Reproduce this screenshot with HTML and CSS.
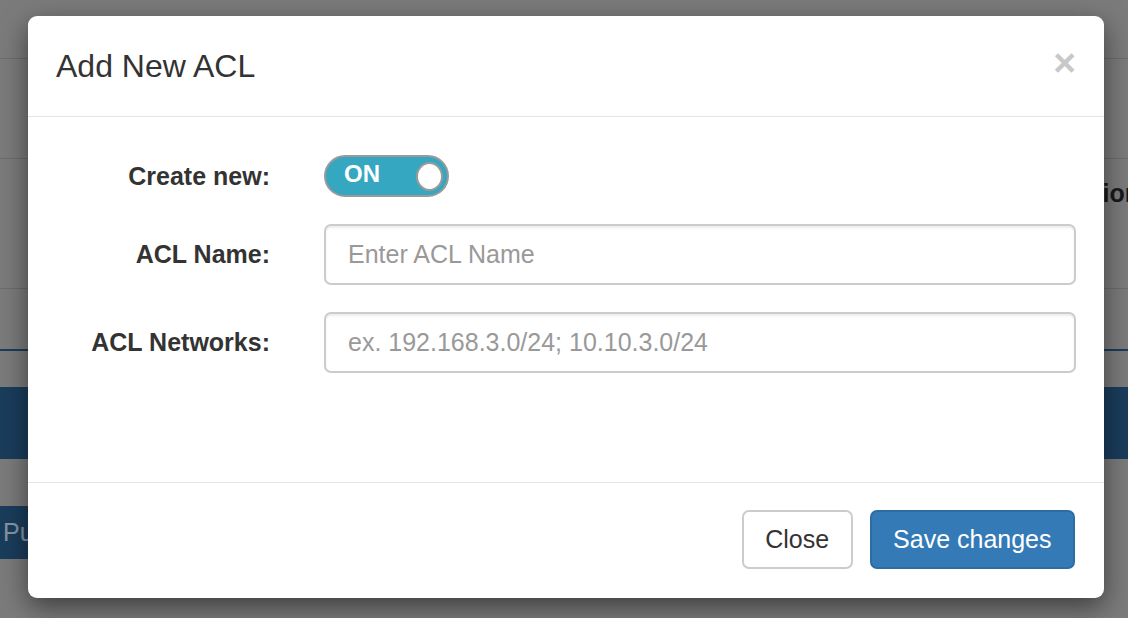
FILE: index.html
```html
<!DOCTYPE html>
<html>
<head>
<meta charset="utf-8">
<title>Add New ACL</title>
<link rel="stylesheet" href="styles.css">
</head>
<body>
<div class="page">
  <div class="bg-top"></div>
  <div class="bg-row"></div>
  <div class="bg-head"><span class="bg-head-text">Action</span></div>
  <div class="bg-row2"></div>
  <div class="bg-gap1"></div>
  <div class="bg-band"></div>
  <div class="bg-gap2"></div>
  <div class="bg-btn-row"><span class="bg-btn">Publish</span></div>
</div>

<div class="modal">
  <div class="modal-header">
    <h4 class="modal-title">Add New ACL</h4>
    <button class="close" type="button">&times;</button>
  </div>
  <div class="modal-body">
    <div class="form-group first">
      <label class="control-label">Create new:</label>
      <div class="switch">
        <span class="switch-text">ON</span>
        <span class="switch-knob"></span>
      </div>
    </div>
    <div class="form-group">
      <label class="control-label">ACL Name:</label>
      <input class="form-control" type="text" placeholder="Enter ACL Name">
    </div>
    <div class="form-group">
      <label class="control-label">ACL Networks:</label>
      <input class="form-control" type="text" placeholder="ex. 192.168.3.0/24; 10.10.3.0/24">
    </div>
  </div>
  <div class="modal-footer">
    <button class="btn btn-default" type="button">Close</button>
    <button class="btn btn-primary" type="button">Save changes</button>
  </div>
</div>
</body>
</html>
```

FILE: styles.css
```css
html, body {
  margin: 0;
  padding: 0;
  height: 100%;
  overflow: hidden;
}
body {
  font-family: "Liberation Sans", Arial, Helvetica, sans-serif;
  background: #7b7b7b;
  color: #333;
  position: relative;
}

/* dimmed page behind the modal */
.page {
  width: 100%;
  height: 618px;
  background: #7b7b7b;
}
.bg-top {
  height: 58px;
  border-bottom: 1px solid #6c6c6c;
}
.bg-row {
  height: 99px;
  border-bottom: 1px solid #6c6c6c;
}
.bg-head {
  height: 129px;
  border-bottom: 1px solid #6c6c6c;
  display: flex;
  justify-content: flex-end;
  align-items: flex-start;
  overflow: hidden;
}
.bg-head-text {
  font-weight: bold;
  font-size: 25px;
  line-height: 25px;
  color: #191919;
  margin-top: 22px;
  margin-right: -12px;
}
.bg-row2 {
  height: 60px;
  border-bottom: 2px solid #1a3d5c;
}
.bg-gap1 {
  height: 36px;
}
.bg-band {
  height: 72px;
  background: #1a3d5c;
}
.bg-gap2 {
  height: 47px;
}
.bg-btn-row {
  height: 53px;
  display: flex;
}
.bg-btn {
  background: #1a3d5c;
  color: #8795a3;
  font-size: 25px;
  line-height: 53px;
  padding: 0 40px 0 3px;
}

/* modal */
.modal {
  position: absolute;
  left: 28px;
  top: 16px;
  width: 1076px;
  background: #fff;
  border-radius: 9px;
  box-shadow: 0 9px 27px rgba(0, 0, 0, 0.5);
}
.modal-header {
  display: flex;
  align-items: flex-start;
  justify-content: space-between;
  padding: 27px 28px 27px;
  border-bottom: 1px solid #e5e5e5;
}
.modal-title {
  margin: 0;
  font-size: 32px;
  line-height: 46px;
  font-weight: normal;
  color: #333;
}
.close {
  border: 0;
  background: transparent;
  padding: 0;
  margin: 0;
  font-family: "Liberation Sans", Arial, sans-serif;
  font-size: 39px;
  font-weight: bold;
  line-height: 39px;
  color: #c8c8c8;
  cursor: pointer;
}

.modal-body {
  padding: 27px 28px 109px;
  display: flex;
  flex-direction: column;
  gap: 27px;
}
.form-group {
  display: flex;
  align-items: center;
  gap: 54px;
}
.form-group.first {
  padding-top: 11px;
}
.control-label {
  width: 214px;
  flex: none;
  text-align: right;
  font-weight: bold;
  font-size: 25px;
  color: #333;
}

.switch {
  height: 38px;
  width: 99px;
  border: 2px solid #9a9a9a;
  border-radius: 21px;
  background: #35a7c1;
  display: flex;
  align-items: center;
  justify-content: space-between;
  padding: 0 4px 0 18px;
  box-sizing: content-box;
}
.switch-text {
  color: #fff;
  font-weight: bold;
  font-size: 24px;
  line-height: 24px;
  margin-top: -4px;
}
.switch-knob {
  width: 23px;
  height: 25px;
  border: 2px solid #9a9a9a;
  border-radius: 50%;
  background: #fff;
}

.form-control {
  flex: 1;
  height: 61px;
  box-sizing: border-box;
  border: 2px solid #ccc;
  border-radius: 7px;
  padding: 0 22px;
  font-family: "Liberation Sans", Arial, sans-serif;
  font-size: 25px;
  color: #555;
  box-shadow: inset 0 2px 2px rgba(0, 0, 0, 0.075);
  outline: none;
  min-width: 0;
}
.form-control::placeholder {
  color: #999;
}

.modal-footer {
  border-top: 1px solid #e5e5e5;
  padding: 27px 29px 29px;
  display: flex;
  justify-content: flex-end;
  gap: 17px;
}
.btn {
  height: 59px;
  box-sizing: border-box;
  padding: 0 21.5px;
  border: 2px solid transparent;
  border-radius: 7px;
  font-family: "Liberation Sans", Arial, sans-serif;
  font-size: 25px;
  line-height: 1;
  cursor: pointer;
}
.btn-default {
  background: #fff;
  border-color: #ccc;
  color: #333;
}
.btn-primary {
  background: #337ab7;
  border-color: #2e6da4;
  color: #fff;
}
```
